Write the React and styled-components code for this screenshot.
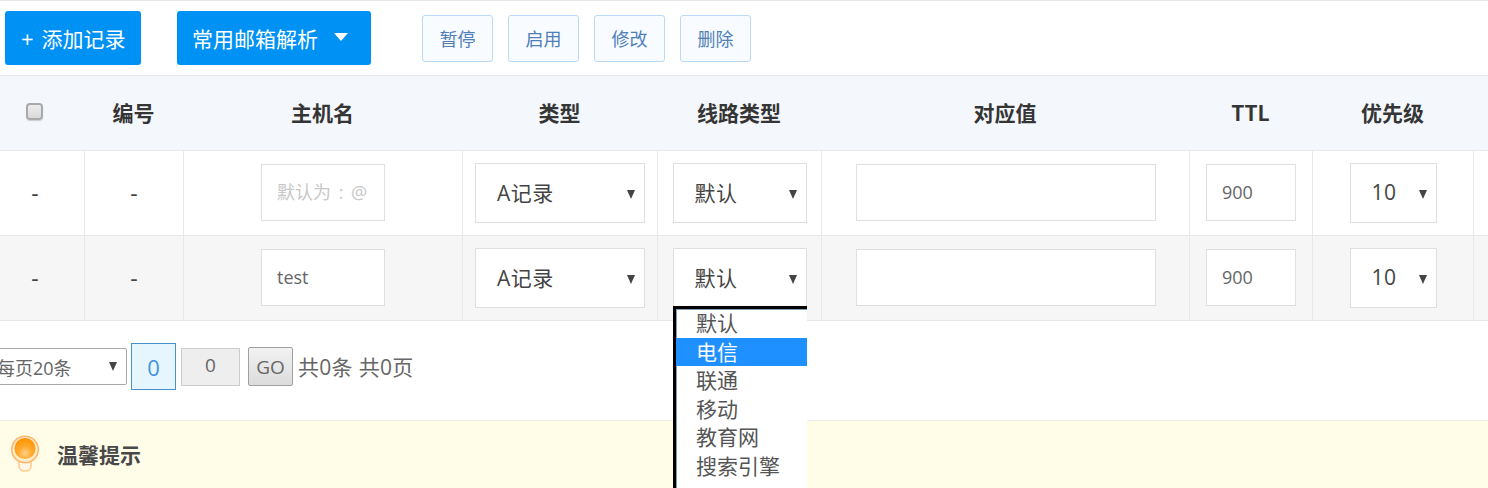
import React from "react";
import styled, { createGlobalStyle } from "styled-components";

const Global = createGlobalStyle`
  html, body { margin: 0; padding: 0; background: #fff; overflow: hidden; }
  body { font-family: "Open Sans", "Noto Sans CJK SC", sans-serif; color: #555; }
  * { box-sizing: border-box; }
`;

const Viewport = styled.div`
  position: relative;
  width: 1488px;
  height: 488px;
  overflow: hidden;
  border-top: 1px solid #e8e8e8;
`;

const Toolbar = styled.div`
  display: flex;
  align-items: center;
  height: 74px;
  padding-left: 5px;
`;

const PrimaryButton = styled.button`
  display: flex;
  align-items: center;
  height: 54px;
  width: ${(p) => p.$w}px;
  margin-right: ${(p) => p.$mr}px;
  padding: 0 0 0 ${(p) => p.$pl}px;
  border: 0;
  border-radius: 3px;
  background: #0091f5;
  color: #fff;
  font: 21px "Noto Sans CJK SC", sans-serif;
`;

const Plus = styled.span`
  margin-right: 8px;
  font: 22px "Open Sans", sans-serif;
`;

const Caret = styled.span`
  width: 0;
  height: 0;
  margin-left: 16px;
  margin-bottom: 3px;
  border-left: 7px solid transparent;
  border-right: 7px solid transparent;
  border-top: 8px solid #fff;
`;

const ActionGroup = styled.div`
  display: flex;
  gap: 15px;
`;

const ActionButton = styled.button`
  width: 71px;
  height: 47px;
  padding: 0;
  border: 1px solid #b9daf9;
  border-radius: 3px;
  background: #f8fbff;
  color: #4f7fb8;
  font: 18px "Noto Sans CJK SC", sans-serif;
`;

const Table = styled.div`
  margin-left: -14px;
  width: 1520px;
`;

const Row = styled.div`
  display: grid;
  grid-template-columns: 99px 99px 279px 195px 164px 368px 123px 161px 32px;
  height: ${(p) => p.$h}px;
  background: ${(p) => p.$bg};
  border-top: 1px solid #e8e8e8;
`;

const HeadCell = styled.div`
  display: flex;
  align-items: center;
  justify-content: center;
  padding: 0 2px 2px 0;
  font: bold 21px "Noto Sans CJK SC", sans-serif;
  color: #353535;
`;

const Check = styled.span`
  display: block;
  width: 17px;
  height: 17px;
  margin-bottom: 1px;
  border: 2px solid #a9a9a9;
  border-radius: 4px;
  background: linear-gradient(#ececec, #dadada);
  box-shadow: 0 1px 1px #ccc;
`;

const Cell = styled.div`
  display: flex;
  align-items: center;
  justify-content: center;
  border-right: ${(p) => (p.$last ? "0" : "1px solid #e8e8e8")};
  font: 21px "Open Sans", "Noto Sans CJK SC", sans-serif;
  color: #444;
`;

const Dash = styled.span`
  display: block;
  font-size: 23px;
`;

const TextInput = styled.input`
  display: block;
  width: ${(p) => p.$w}px;
  height: 57px;
  margin-bottom: 1px;
  padding: 0 15px 2px;
  border: 1px solid #dfdfdf;
  border-radius: 0;
  outline: 0;
  background: #fff;
  color: #666;
  font: 18px "Open Sans", "Noto Sans CJK SC", sans-serif;
  &::placeholder { color: #c8c8c8; opacity: 1; word-spacing: 3px; }
`;

const SelectBox = styled.div`
  display: flex;
  align-items: center;
  justify-content: space-between;
  width: ${(p) => p.$w}px;
  height: 60px;
  padding: 0 9px 3px 21px;
  border: 1px solid #dfdfdf;
  background: #fff;
  color: #444;
  font: 21px "Open Sans", "Noto Sans CJK SC", sans-serif;
  letter-spacing: 0.5px;
`;

const Arrow = styled.span`
  flex: none;
  width: 0;
  height: 0;
  margin-top: ${(p) => p.$mt ?? 6}px;
  border-left: 4.5px solid transparent;
  border-right: 4.5px solid transparent;
  border-top: 9px solid #444;
`;

const Pager = styled.div`
  display: flex;
  align-items: center;
  height: 100px;
  border-top: 1px solid #e8e8e8;
  padding-bottom: 8px;
  color: #666;
`;

const PageSelect = styled.div`
  display: flex;
  align-items: center;
  justify-content: space-between;
  width: 137px;
  height: 37px;
  margin-left: -10px;
  margin-right: 4px;
  padding: 0 9px 0 6px;
  border: 1px solid #aaa;
  border-radius: 2px;
  background: #fff;
  font: 18px "Open Sans", "Noto Sans CJK SC", sans-serif;
`;

const CurrentPage = styled.div`
  display: flex;
  align-items: center;
  justify-content: center;
  width: 45px;
  height: 47px;
  margin-right: 5px;
  background: #e6f6ff;
  border: 1px solid #4a90c8;
  color: #4593db;
  font: 22px "Open Sans", sans-serif;
`;

const GotoInput = styled.div`
  display: flex;
  align-items: center;
  justify-content: center;
  width: 59px;
  height: 38px;
  margin-right: 8px;
  padding-bottom: 3px;
  background: #eee;
  border: 1px solid #ccc;
  color: #666;
  font: 19px "Open Sans", sans-serif;
`;

const GoButton = styled.button`
  width: 45px;
  height: 39px;
  margin-right: 5px;
  padding: 0;
  border: 1px solid #a0a0a0;
  border-radius: 2px;
  background: linear-gradient(#f2f2f2, #dcdcdc);
  color: #666;
  font: 19px "Open Sans", sans-serif;
`;

const PagerText = styled.span`
  padding-bottom: 2px;
  font: 21px "Open Sans", "Noto Sans CJK SC", sans-serif;
  color: #666;
  letter-spacing: 0.3px;
`;

const Tip = styled.div`
  display: flex;
  align-items: center;
  height: 68px;
  padding: 0 0 1px 10px;
  border-top: 1px solid #eee;
  background: #fffce8;
`;

const TipTitle = styled.strong`
  margin-left: 17px;
  font: bold 21px "Noto Sans CJK SC", sans-serif;
  color: #484848;
`;

const Menu = styled.div`
  position: absolute;
  left: 673px;
  top: 305px;
  width: 134px;
  height: 190px;
  border-left: 3px solid #000;
  border-top: 3px solid #000;
  background: #fff;
  box-shadow: inset 1px 1px 0 #7f9db9;
`;

const MenuItem = styled.div`
  height: 28.6px;
  padding-left: 20px;
  font: 21px/26px "Noto Sans CJK SC", sans-serif;
  background: ${(p) => (p.$active ? "#1e90ff" : "transparent")};
  color: ${(p) => (p.$active ? "#fff" : "#555")};
`;

const Bulb = () => (
  <svg width="30" height="38" viewBox="0 0 30 38">
    <defs>
      <radialGradient id="bulbCore" cx="50%" cy="72%" r="70%">
        <stop offset="0%" stopColor="#ffd08a" />
        <stop offset="45%" stopColor="#ffab2e" />
        <stop offset="100%" stopColor="#ff9200" />
      </radialGradient>
    </defs>
    <path d="M9 25v6c0 3 2.500 5 6 5s6-2 6-5v-6" fill="#fff8e6" stroke="#ffc98a" strokeWidth="1.6" />
    <circle cx="15" cy="14.500" r="13.300" fill="#ffeccb" stroke="#ffb870" strokeWidth="1.6" />
    <circle cx="15" cy="13.500" r="10.500" fill="url(#bulbCore)" />
  </svg>
);

const heads = ["编号", "主机名", "类型", "线路类型", "对应值", "TTL", "优先级"];
const rows = [
  { bg: "#fff", host: "", hostHolder: "默认为 : @" },
  { bg: "#f6f6f6", host: "test", hostHolder: "" },
];
const lines = ["默认", "电信", "联通", "移动", "教育网", "搜索引擎"];

export default function App() {
  return (
    <Viewport>
      <Global />
      <Toolbar>
        <PrimaryButton $w={136} $mr={36} $pl={16}><Plus>+</Plus>添加记录</PrimaryButton>
        <PrimaryButton $w={194} $mr={51} $pl={15}>常用邮箱解析<Caret /></PrimaryButton>
        <ActionGroup>
          {["暂停", "启用", "修改", "删除"].map((t) => (
            <ActionButton key={t}>{t}</ActionButton>
          ))}
        </ActionGroup>
      </Toolbar>
      <Table>
        <Row $h={75} $bg="#f4f7fc">
          <HeadCell><Check /></HeadCell>
          {heads.map((t) => (
            <HeadCell key={t}>{t}</HeadCell>
          ))}
          <HeadCell />
        </Row>
        {rows.map((r, i) => (
          <Row key={i} $h={85} $bg={r.bg}>
            <Cell><Dash>-</Dash></Cell>
            <Cell><Dash>-</Dash></Cell>
            <Cell>
              <TextInput $w={124} defaultValue={r.host} placeholder={r.hostHolder} />
            </Cell>
            <Cell><SelectBox $w={170}>A记录<Arrow /></SelectBox></Cell>
            <Cell><SelectBox $w={134}>默认<Arrow /></SelectBox></Cell>
            <Cell><TextInput $w={300} /></Cell>
            <Cell><TextInput $w={90} defaultValue="900" /></Cell>
            <Cell><SelectBox $w={87}>10<Arrow /></SelectBox></Cell>
            <Cell $last />
          </Row>
        ))}
      </Table>
      <Pager>
        <PageSelect>每页20条<Arrow $mt={0} /></PageSelect>
        <CurrentPage>0</CurrentPage>
        <GotoInput>0</GotoInput>
        <GoButton>GO</GoButton>
        <PagerText>共0条 共0页</PagerText>
      </Pager>
      <Tip>
        <Bulb />
        <TipTitle>温馨提示</TipTitle>
      </Tip>
      <Menu>
        {lines.map((t, i) => (
          <MenuItem key={t} $active={i === 1}>{t}</MenuItem>
        ))}
      </Menu>
    </Viewport>
  );
}
